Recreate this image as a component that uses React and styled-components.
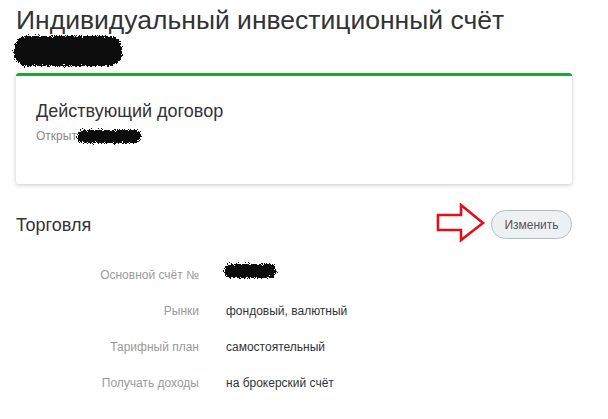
import React from 'react'
import styled, { createGlobalStyle } from 'styled-components'

const FONT = `"Liberation Sans", Roboto, Arial, sans-serif`

const GlobalStyle = createGlobalStyle`
  body {
    margin: 0;
    background: #fff;
    font-family: ${FONT};
    color: #333;
  }
`

const rows = [
  { label: 'Основной счёт №', value: null },
  { label: 'Рынки', value: 'фондовый, валютный' },
  { label: 'Тарифный план', value: 'самостоятельный' },
  { label: 'Получать доходы', value: 'на брокерский счёт' },
]

// redaction blob with a grainy, ragged edge
function Scribble({ w, h, id }) {
  return (
    <Blob width={w} height={h} viewBox={`0 0 ${w} ${h}`}>
      <defs>
        <filter id={id} x="0" y="0" width="100%" height="100%" filterUnits="userSpaceOnUse">
          <feGaussianBlur in="SourceGraphic" stdDeviation="2.2" result="b" />
          <feTurbulence type="fractalNoise" baseFrequency="1.4" numOctaves="2" seed="4" result="n" />
          <feColorMatrix in="n" type="matrix" values="0 0 0 0 0  0 0 0 0 0  0 0 0 0 0  1.6 0 0 0 -0.3" result="na" />
          <feComposite in="b" in2="na" operator="arithmetic" k1="0" k2="1.5" k3="-1" k4="0.05" result="d" />
          <feComponentTransfer in="d" result="t">
            <feFuncA type="discrete" tableValues="0 1" />
          </feComponentTransfer>
          <feFlood floodColor="#0d0d0d" result="f" />
          <feComposite in="f" in2="t" operator="in" />
        </filter>
      </defs>
      <rect
        x="4" y="4" width={w - 8} height={h - 8}
        rx={(h - 8) / 2.3}
        fill="#000"
        filter={`url(#${id})`}
      />
    </Blob>
  )
}

function Arrow() {
  return (
    <ArrowMark width="50" height="40" viewBox="0 0 50 40">
      <polygon
        points="2,12 25,12 25,2 47,20 25,37 25,27 2,27"
        fill="none"
        stroke="#e3101c"
        strokeWidth="2.6"
        strokeLinejoin="miter"
      />
    </ArrowMark>
  )
}

export default function App() {
  return (
    <>
      <GlobalStyle />
      <Page>
        <Title>Индивидуальный инвестиционный счёт</Title>
        <TitleMask>
          <Scribble w={118} h={40} id="s1" />
        </TitleMask>

        <Card>
          <CardTitle>Действующий договор</CardTitle>
          <CardSub>
            Открыт
            <Scribble w={74} h={23} id="s2" />
          </CardSub>
        </Card>

        <SectionHead>
          <SectionTitle>Торговля</SectionTitle>
          <EditWrap>
            <Arrow />
            <EditButton>Изменить</EditButton>
          </EditWrap>
        </SectionHead>

        <Details>
          {rows.map((r) => (
            <React.Fragment key={r.label}>
              <Label>{r.label}</Label>
              <Value>
                {r.value ?? <Scribble w={62} h={24} id="s3" />}
              </Value>
            </React.Fragment>
          ))}
        </Details>
      </Page>
    </>
  )
}

const Page = styled.div`
  width: 556px;
  padding: 5px 0 0 16px;
`

const Title = styled.h1`
  margin: 0;
  font-size: 26.5px;
  line-height: 30px;
  font-weight: normal;
  color: #333;
`

const TitleMask = styled.div`
  height: 42px;
  margin: -4px 0 0 -7px;
  display: flex;
  align-items: flex-start;
`

const Blob = styled.svg`
  display: block;
  flex: none;
`

const Card = styled.div`
  border-top: 3px solid #27a03b;
  border-radius: 3px;
  background: #fff;
  box-shadow: 0 1px 4px rgba(0, 0, 0, 0.22);
  padding: 23px 20px 0;
  box-sizing: content-box;
  height: 85px;
`

const CardTitle = styled.div`
  font-size: 18px;
  line-height: 24px;
  color: #333;
`

const CardSub = styled.div`
  display: flex;
  align-items: center;
  font-size: 12px;
  line-height: 16px;
  color: #8a8a8a;
  margin-top: 2px;

  ${Blob} {
    margin: 0 0 -2px -5px;
  }
`

const SectionHead = styled.div`
  display: flex;
  justify-content: space-between;
  align-items: center;
  margin-top: 26px;
  height: 29px;
`

const SectionTitle = styled.h2`
  margin: 0;
  font-size: 18px;
  font-weight: normal;
  line-height: 24px;
  color: #333;
`

const EditWrap = styled.div`
  position: relative;
`

const ArrowMark = styled.svg`
  position: absolute;
  right: calc(100% + 5px);
  top: -7px;
`

const EditButton = styled.button`
  width: 81px;
  height: 29px;
  border: 1px solid #b3bcc5;
  border-radius: 15px;
  background: #eef1f4;
  color: #555;
  font-family: ${FONT};
  font-size: 12px;
  padding: 0;
  cursor: pointer;
`

const Details = styled.div`
  display: grid;
  grid-template-columns: 183px 1fr;
  column-gap: 29px;
  margin-top: 18px;
  grid-auto-rows: 36px;
  font-size: 12px;
  line-height: 36px;
`

const Label = styled.div`
  text-align: right;
  color: #9a9a9a;
`

const Value = styled.div`
  color: #333;
  display: flex;
  align-items: center;
  margin-left: -2px;

  ${Blob} {
    margin: -8px 0 0 -7px;
  }
`
